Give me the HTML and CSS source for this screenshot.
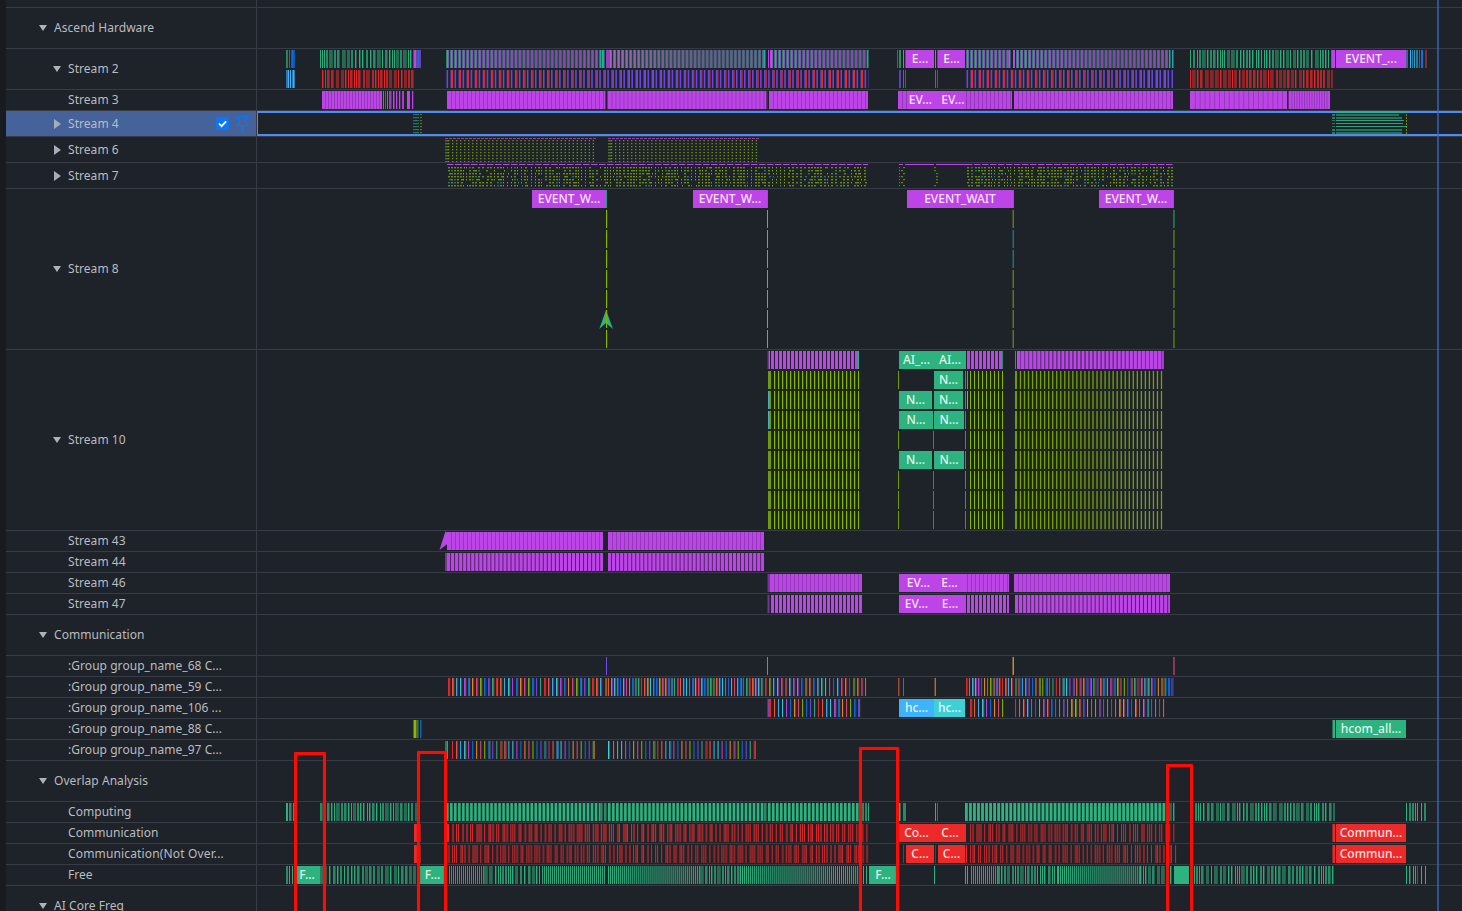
FILE: index.html
```
<!DOCTYPE html>
<html lang="en">
<head>
    <meta charset="UTF-8">
    <meta name="viewport" content="width=device-width, initial-scale=1.0">
    <title>Timeline</title>
    <link rel="stylesheet" href="styles.css">
</head>
<body>
    <div class="timeline">
        <div class="row spacer"><div class="label"></div><div class="track"></div></div>
        <div class="row group"><div class="label"><i class="caret down"></i>Ascend Hardware</div><div class="track"></div></div>
        <div class="row double"><div class="label child"><i class="caret down"></i>Stream 2</div><div class="track" id="s2"></div></div>
        <div class="row"><div class="label child">Stream 3</div><div class="track" id="s3"></div></div>
        <div class="row folded selected">
            <div class="label child">
                <i class="caret right"></i>Stream 4
                <span class="tools">
                    <svg class="check" viewBox="0 0 13 13"><rect width="13" height="13" rx="2" fill="#0a78f5"/><path d="M3 6.5l2.6 2.7L10.2 4.4" fill="none" stroke="#fff" stroke-width="1.8"/></svg>
                    <svg class="pin" viewBox="0 0 13 15"><path d="M1 .5h11v2H9.500v4.500l3 2.500H.5L3.500 7V2.500H1zM5.500 9.500v3.500l1 1.500 1-1.500V9.500" fill="none" stroke="#0a78f5" stroke-width="1.2"/></svg>
                </span>
            </div>
            <div class="track" id="s4"></div>
        </div>
        <div class="row folded"><div class="label child"><i class="caret right"></i>Stream 6</div><div class="track" id="s6"></div></div>
        <div class="row folded"><div class="label child"><i class="caret right"></i>Stream 7</div><div class="track" id="s7"></div></div>
        <div class="row lanes8"><div class="label child"><i class="caret down"></i>Stream 8</div><div class="track" id="s8"></div></div>
        <div class="row lanes9"><div class="label child"><i class="caret down"></i>Stream 10</div><div class="track" id="s10"></div></div>
        <div class="row"><div class="label child">Stream 43</div><div class="track" id="s43"></div></div>
        <div class="row"><div class="label child">Stream 44</div><div class="track" id="s44"></div></div>
        <div class="row"><div class="label child">Stream 46</div><div class="track" id="s46"></div></div>
        <div class="row"><div class="label child">Stream 47</div><div class="track" id="s47"></div></div>
        <div class="row group"><div class="label"><i class="caret down"></i>Communication</div><div class="track"></div></div>
        <div class="row"><div class="label child">:Group group_name_68 C...</div><div class="track" id="g68"></div></div>
        <div class="row"><div class="label child">:Group group_name_59 C...</div><div class="track" id="g59"></div></div>
        <div class="row"><div class="label child">:Group group_name_106 ...</div><div class="track" id="g106"></div></div>
        <div class="row"><div class="label child">:Group group_name_88 C...</div><div class="track" id="g88"></div></div>
        <div class="row"><div class="label child">:Group group_name_97 C...</div><div class="track" id="g97"></div></div>
        <div class="row group"><div class="label"><i class="caret down"></i>Overlap Analysis</div><div class="track"></div></div>
        <div class="row"><div class="label child">Computing</div><div class="track" id="computing"></div></div>
        <div class="row"><div class="label child">Communication</div><div class="track" id="comm"></div></div>
        <div class="row"><div class="label child wide">Communication(Not Over...</div><div class="track" id="notover"></div></div>
        <div class="row"><div class="label child">Free</div><div class="track" id="free"></div></div>
        <div class="row group"><div class="label"><i class="caret down"></i>AI Core Freq</div><div class="track"></div></div>

        <div class="cursor"></div>
        <div class="marker m1"></div>
        <div class="marker m2"></div>
        <div class="marker m3"></div>
        <div class="marker m4"></div>
    </div>
    <script src="timeline.js"></script>
</body>
</html>
```
FILE: styles.css
```
* {
    box-sizing: border-box;
}

body {
    margin: 0;
    height: 911px;
    overflow: hidden;
    background: #1e2229;
    color: #b9bcc0;
    font-family: "Noto Sans", "Open Sans", sans-serif;
    font-size: 12px;
}

.timeline {
    position: relative;
    height: 911px;
    overflow: hidden;
    border-left: 6px solid #181b1f;
}

.row {
    display: flex;
    height: 21px;
    border-bottom: 1px solid #363b46;
}

.spacer { height: 8px; }
.group, .double { height: 41px; }
.folded { height: 26px; }
.lanes8 { height: 161px; }
.lanes9 { height: 181px; }

.label {
    display: flex;
    align-items: center;
    flex: none;
    width: 251px;
    padding-left: 48px;
    padding-bottom: 2px;
    border-right: 1px solid #363b46;
    letter-spacing: 0.05px;
    white-space: nowrap;
}

.label.child {
    padding-left: 62px;
}

.label.wide {
    letter-spacing: 0.15px;
}

.folded .label {
    padding-bottom: 0;
}

.caret {
    border: 0 solid transparent;
}

.caret.down {
    margin-top: 2px;
    margin-left: -15px;
    margin-right: 7px;
    border-width: 6px 4.5px 0;
    border-top-color: #b0b3b6;
}

.caret.right {
    width: 7px;
    margin-left: -14px;
    margin-right: 7px;
    border-width: 5px 0 5px 7px;
    border-left-color: #a4adb8;
}

.selected .label {
    background: #46629b;
}

.selected .track {
    border: 2px solid #4d8bf5;
    border-width: 2px 0 2px 1px;
}

.tools {
    display: flex;
    align-items: center;
    gap: 7px;
    margin-left: auto;
    margin-right: 7px;
}

.check { width: 13px; height: 13px; }
.pin { width: 13px; height: 15px; }

.track {
    position: relative;
    flex: 1;
}

.track svg {
    display: block;
    position: absolute;
    left: 0;
    top: 0;
}

.selected .track svg {
    left: -1px;
    top: -2px;
}

.event {
    position: absolute;
    height: 18px;
    line-height: 18px;
    text-align: center;
    color: rgba(255, 255, 255, 0.87);
    font-weight: 500;
    white-space: nowrap;
    overflow: hidden;
}

.cursor {
    position: absolute;
    left: 1431px;
    top: 0;
    width: 2px;
    height: 100%;
    background: rgba(54, 110, 205, 0.65);
}

.marker {
    position: absolute;
    bottom: -10px;
    border: 3px solid #fb0d05;
    border-radius: 1px;
    box-shadow: 0 0 1px #a01010, inset 0 0 1px #a01010;
}

.m1 { left: 288px; width: 32px; top: 752px; }
.m2 { left: 411px; width: 30px; top: 751px; }
.m3 { left: 853px; width: 40px; top: 747px; }
.m4 { left: 1160px; width: 27px; top: 764px; }
```
FILE: timeline.js
```
const ORIGIN = 257;
const PURPLE = '#bd45e8';
const GREEN = '#2db37f';
const OLIVE = '#86b800';
const RED = '#ed2a2a';
const VIOLET = '#6a4df0';
const BLUE = '#0a6fe8';
const SKY = '#3db3fb';
const CYAN = '#3fd0d6';
const MIX = [RED, '#ff5a36', SKY, CYAN, PURPLE, BLUE, '#f09022', '#e04a80', OLIVE, BLUE, VIOLET, GREEN];

let seed = 7;
function rand() {
    seed = (seed * 16807) % 2147483647;
    return seed / 2147483647;
}

// Collects the shapes of one row, x is measured on the whole window
function row(id) {
    const el = document.getElementById(id);
    const parts = [];
    const r = {
        box(x, y, w, h, color, alpha = 1) {
            parts.push(`<rect x="${+x.toFixed(2)}" y="${y}" width="${+w.toFixed(2)}" height="${h}" fill="${color}" opacity="${alpha}"/>`);
            return r;
        },
        bar(x, w, color, lane = 0, alpha = 1) {
            return r.box(x, 1 + lane * 20, w, 18, color, alpha);
        },
        comb(from, to, pitch, w, color, lane = 0, alpha = 1) {
            for (let x = from; x < to; x += pitch) r.bar(x, Math.min(w, to - x), color, lane, alpha);
            return r;
        },
        solid(from, to, pitch, lane = 0) {
            r.bar(from, to - from, PURPLE, lane);
            for (let x = from + pitch; x < to - 1; x += pitch) r.bar(x, 0.9, '#7d35a0', lane, 0.75);
            return r;
        },
        // irregular bars, thin ones bright and wide ones dim, some touching
        noise(from, to, color, density = 0.75, lane = 0) {
            let x = from;
            while (x < to) {
                const v = rand();
                const w = v < 0.45 ? 1 : v < 0.8 ? 2 : 3;
                r.bar(x, Math.min(w, to - x), color, lane, w === 1 ? 0.95 : w === 2 ? 0.7 : 0.5);
                x += w;
                if (rand() < 0.5 && x < to) {
                    r.bar(x, 1, color, lane, 0.4);
                    x += 1;
                }
                x += rand() < density ? 1 : 2;
            }
            return r;
        },
        mix(from, to, pitch, extra = 0, lane = 0) {
            let i = 0;
            for (let x = from; x < to; x += pitch) {
                r.bar(x, 1.1, MIX[i++ % MIX.length], lane, 0.9);
                if (rand() < extra) r.bar(x + 1.2, 1, MIX[Math.floor(rand() * 12)], lane, 0.65);
            }
            return r;
        },
        path(d, color) {
            parts.push(`<path d="${d}" fill="${color}"/>`);
            return r;
        },
        event(from, to, text, color, lane = 0) {
            const div = document.createElement('div');
            div.className = 'event';
            div.textContent = text;
            div.style.cssText = `left:${from - ORIGIN}px;width:${to - from}px;top:${1 + lane * 20}px;background:${color}`;
            el.appendChild(div);
            return r;
        },
        draw() {
            const h = el.parentNode.offsetHeight - 1;
            el.insertAdjacentHTML('afterbegin', `<svg width="1205" height="${h}" viewBox="${ORIGIN} 0 1205 ${h}">${parts.join('')}</svg>`);
        }
    };
    return r;
}

// Stream 2
const s2 = row('s2');
s2.bar(286, 1, GREEN, 0, 0.7).bar(287, 1, BLUE).bar(289, 1, BLUE).bar(291, 4, '#1457a6').bar(292, 1, BLUE);
s2.bar(286, 2, '#2b78aa', 1).bar(288, 1, SKY, 1).bar(290, 1, SKY, 1).bar(292, 3, '#2b78aa', 1).bar(293, 1, SKY, 1);
s2.noise(320, 414, GREEN, 0.8).bar(414, 2, PURPLE).bar(416, 2, '#803a9d').bar(418, 1, BLUE).bar(419, 2, '#70409c');
s2.noise(322, 415, RED, 0.75, 1);
[[446, 600], [609, 764], [770, 867], [966, 1009], [1016, 1170]].forEach(([a, b]) => {
    s2.comb(a, b, 4.02, 1, '#218766').comb(a + 1, b, 4.02, 1, '#9d6cbc').comb(a + 2, b, 4.02, 0.8, PURPLE).comb(a + 2.8, b, 4.02, 0.3, GREEN);
});
[[446, 869], [966, 1173]].forEach(([a, b]) => {
    s2.comb(a + 0.5, b, 4.02, 1.6, VIOLET, 1, 0.9).comb(a + 6, b, 8.04, 1.1, RED, 1);
});
[600, 603, 764, 867, 1009, 1169, 1172].forEach(x => s2.bar(x, 1.5, '#2ba0aa'));
s2.bar(602, 1, GREEN).bar(606, 3, '#9b3cbf').bar(768, 1, PURPLE).bar(770, 1, PURPLE).bar(1013, 2, PURPLE);
s2.bar(897, 1, '#81409e').bar(899, 2, '#249264').bar(903, 1, GREEN).bar(905, 1, '#803a9d').bar(935, 1, GREEN).bar(937, 1, '#803a9d');
s2.bar(899, 2, VIOLET, 1, 0.75).bar(903, 1, VIOLET, 1).bar(905, 1, RED, 1, 0.8).bar(935, 1, VIOLET, 1).bar(937, 1, RED, 1, 0.8);
s2.noise(1190, 1332, GREEN, 0.8).noise(1190, 1333, RED, 0.75, 1).bar(1332, 3, PURPLE);
s2.bar(1406, 2, '#42658e').bar(1410, 1, SKY).bar(1412, 1, '#2b78aa').bar(1414, 1, CYAN, 0, 0.7).bar(1416, 2, '#1979b7').bar(1419, 1, BLUE).bar(1421, 2, BLUE).bar(1425, 2, '#822c2b');
s2.event(906, 934, 'E...', PURPLE).event(938, 965, 'E...', PURPLE).event(1336, 1406, 'EVENT_...', PURPLE);
s2.draw();

// Stream 3
const s3 = row('s3');
s3.solid(322, 382, 3).bar(383, 1, PURPLE).bar(385, 1, PURPLE, 0, 0.7).bar(387, 1, PURPLE).bar(389, 2.5, PURPLE, 0, 0.8).bar(393, 1.5, PURPLE);
s3.bar(396, 1.3, PURPLE).bar(399, 1.3, PURPLE).bar(402, 2, PURPLE, 0, 0.85).bar(407, 3, PURPLE).bar(412, 1.3, PURPLE);
s3.solid(447, 605, 4).bar(605, 1, '#613078').solid(607.5, 766.5, 4).bar(766.5, 1, '#613078').solid(769, 868, 4);
s3.solid(898, 1012, 4).solid(1014, 1173, 4).solid(1190, 1287, 4.85).bar(1288, 1, '#613078').solid(1289, 1330, 2.5);
s3.bar(908, 58, PURPLE).event(906, 935, 'EV...', 'transparent').event(938, 968, 'EV...', 'transparent').draw();

// Stream 4, folded
const s4 = row('s4');
const ends = [1399, 1402, 1404, 1403, 1407, 1402, 1402];
ends.forEach((end, i) => {
    const y = 3 + i * 3;
    const h = i % 6 < 2 || i > 4 ? 2 : 1;
    s4.box(413, y, 3, 1.2, '#398c9e', 0.7).box(416, y, 3, 1.2, GREEN, 0.6).box(420, y, 2, 1.2, OLIVE, 0.55);
    s4.box(1332, y, 3, h, GREEN, 0.6).box(1336, y, end - 1336, h, GREEN, h > 1 ? 0.55 : 0.9).box(1406, y, 1, 2, OLIVE, 0.7);
});
s4.box(1336, 1, 70, 1, '#2daea5').draw();

// Stream 6 and 7, folded
const s6 = row('s6');
[[445, 596], [608, 757]].forEach(([a, b]) => {
    for (let x = a; x < b; x += 4) s6.box(x, 1, 3, 1, PURPLE, 0.75);
    for (let y = 3; y < 25; y += 3) {
        s6.box(a, y, 3, 1.5, '#5b8420', 0.8);
        for (let x = a + 3; x < b; x += 4.02) s6.box(x, y, 1.3, 1.3, OLIVE, 0.8);
    }
});
s6.draw();

const s7 = row('s7');
[[447, 868], [966, 1173]].forEach(([a, b]) => {
    for (let x = a; x < b; x += 8) s7.box(x, 1, Math.min(6.5, b - x), 1, PURPLE);
    for (let x = a + 1; x < b - 1; x += rand() < 0.5 ? 4 : 3) {
        const w = rand() < 0.4 ? 1 : 2;
        for (let y = 4; y < 24; y += 3) {
            if (rand() < 0.88) s7.box(x + (rand() < 0.15 ? 1 : 0), y, w, 1.4, rand() < 0.08 ? '#279385' : OLIVE, w > 1 ? 0.7 : 0.9);
        }
    }
});
s7.box(899, 1, 4, 1, PURPLE).box(905, 1, 29, 1, PURPLE).box(936, 1, 30, 1, PURPLE);
for (let y = 4; y < 24; y += 3) {
    s7.box(899, y, 1, 1.2, '#279385').box(y % 2 ? 901 : 903, y, 2, 1.2, OLIVE, 0.7).box(y > 8 && y < 20 ? 936 : 934, y, 2, 1.2, OLIVE, 0.6);
}
s7.draw();

// Stream 8
const s8 = row('s8');
for (let lane = 1; lane < 8; lane++) {
    s8.bar(606, 1, OLIVE, lane).bar(607, 1, OLIVE, lane, 0.15).bar(767, 1, '#8fa812', lane);
    s8.bar(1012.6, 1.2, lane === 2 || lane === 3 ? '#25877a' : '#6f8c20', lane).bar(1173.2, 1.5, lane === 1 ? '#258060' : '#597a19', lane);
}
s8.path('M606 121L599.3 140L606 134L613 140Z', GREEN).bar(606, 1, OLIVE, 6);
[[532, 606, 'EVENT_W...'], [693, 767, 'EVENT_W...'], [907, 1013, 'EVENT_WAIT'], [1099, 1173, 'EVENT_W...']].forEach(([a, b, t]) => {
    s8.event(a, b, t, PURPLE).bar(b, 1, '#279b79');
});
s8.draw();

// Stream 10
const s10 = row('s10');
s10.bar(767.5, 1.5, '#7a3299').bar(769, 1, GREEN).comb(771, 858, 4, 3, PURPLE).bar(858, 1, GREEN);
s10.comb(967, 1002, 4, 3, PURPLE).bar(1002, 1, GREEN, 0, 0.7);
s10.bar(1015, 1, '#279b79').comb(1017, 1163, 4.03, 3.1, PURPLE).comb(1020, 1163, 4.03, 1, '#713791').bar(1163, 1, GREEN, 0, 0.7);
for (let lane = 1; lane < 9; lane++) {
    s10.bar(768, 3, '#70990c', lane).comb(774, 859, 4, 1, OLIVE, lane).comb(775, 859, 4, 0.3, OLIVE, lane, 0.6);
    s10.comb(970, 1003, 4, 1, OLIVE, lane);
    s10.bar(1015, 2, '#70990c', lane).comb(1019.8, 1164, 4.03, 1.3, OLIVE, lane, 0.85);
    s10.bar(965, 1, OLIVE, lane, 0.7).bar(967, 1, lane < 2 ? GREEN : lane === 2 ? SKY : OLIVE, lane, lane < 3 ? 1 : 0);
    if (lane === 1 || lane === 4 || lane > 5) s10.bar(898, 1, OLIVE, lane, 0.8);
    if (lane === 4 || lane > 5) s10.bar(933, 1, OLIVE, lane, 0.65);
}
s10.bar(768, 1, SKY, 2, 0.8).bar(768, 1, SKY, 3, 0.8);
s10.event(899, 934, 'AI_...', GREEN).event(934, 966, 'AI...', GREEN).event(934, 963, 'N...', GREEN, 1);
s10.event(899, 932, 'N...', GREEN, 2).event(934, 963, 'N...', GREEN, 2);
s10.event(899, 933, 'N...', GREEN, 3).event(934, 964, 'N...', GREEN, 3);
s10.event(899, 932, 'N...', GREEN, 5).event(934, 964, 'N...', GREEN, 5).draw();

// Stream 43 - 47
row('s43').solid(447, 603, 4).solid(608, 764, 4).path('M445.5 0L439.5 19L446 14L448 12V3Z', PURPLE).draw();
row('s44').bar(445, 2, '#713791').comb(447, 603, 4.03, 3.1, PURPLE).comb(447, 603, 4.03, 4.1, PURPLE, 0, 0.2)
    .comb(608, 764, 4.03, 3.1, PURPLE).comb(608, 764, 4.03, 4.1, PURPLE, 0, 0.2).draw();
row('s46').bar(767.5, 2.5, '#713791').solid(770, 862, 4).solid(899, 1009, 4).bar(903, 63, PURPLE).solid(1014, 1170, 4)
    .event(902, 935, 'EV...', 'transparent').event(934, 965, 'E...', 'transparent').draw();
row('s47').bar(767.5, 2, '#713791').comb(771, 862, 4, 3, PURPLE).comb(967, 1009, 4, 3, PURPLE)
    .comb(1015, 1170, 4.03, 3.1, PURPLE).comb(1015, 1170, 4.03, 4.1, PURPLE, 0, 0.2)
    .event(899, 934, 'EV...', PURPLE).event(934, 966, 'E...', PURPLE).draw();

// Communication groups
row('g68').bar(606, 1, VIOLET).bar(767, 1, GREEN).bar(1012.5, 1.5, '#d0852c').bar(1173, 2, '#8c3659').draw();
row('g59').mix(448, 604, 4, 0.75).mix(605, 764, 3, 0.65).mix(765, 868, 4, 0.9).bar(898, 1.5, '#9b4930').bar(903, 1, VIOLET)
    .bar(934.6, 1.3, '#b97b2b').mix(966, 1012, 3, 0.6).mix(1015, 1173, 3.4, 0.65).draw();
row('g106').bar(767.5, 1.5, '#8340a6').bar(769, 1, BLUE).mix(770, 859, 4, 0.15).mix(970, 1003, 4, 0.1).mix(1015, 1164, 4, 0.4)
    .event(899, 934, 'hc...', SKY).event(934, 965, 'hc...', CYAN).draw();
row('g88').bar(413.5, 3, OLIVE).bar(417, 1.5, '#267d61').bar(420, 1.5, '#155eb0').bar(1332, 1, GREEN, 0, 0.5).bar(1333, 2, GREEN)
    .event(1336, 1406, 'hcom_all...', GREEN).draw();
row('g97').bar(445, 2, '#277a5c').bar(447, 1, '#e04a80').mix(452, 596, 4.02, 0.2).bar(608, 1, CYAN).mix(609, 757, 4.02, 0.2).draw();

// Overlap analysis
row('computing').bar(286, 1, GREEN).noise(287, 295, GREEN, 0.7).noise(320, 421, GREEN, 0.8)
    .comb(446, 600, 4.02, 2.6, GREEN).noise(600, 607, GREEN).comb(608, 764, 4.02, 2.6, GREEN).noise(764, 768, GREEN)
    .comb(768, 862, 4, 2.6, GREEN).noise(862, 869, GREEN, 0.9).bar(899, 1.5, GREEN).bar(903, 3, GREEN, 0, 0.7)
    .bar(935, 1, GREEN).bar(937, 1, GREEN, 0, 0.6).comb(965, 1166, 4.03, 2.8, GREEN).noise(1166, 1175, GREEN)
    .noise(1190, 1335, GREEN, 0.78).bar(1406, 1, GREEN).noise(1409, 1418, GREEN, 0.75).bar(1421, 1, GREEN).bar(1424, 2, GREEN, 0, 0.7).draw();

// bars come in clusters of one to three followed by a wider gap
function redBars(r, from, to, alpha) {
    let x = from;
    while (x < to) {
        const n = 1 + Math.floor(rand() * 3);
        for (let i = 0; i < n && x < to; i++) {
            const dim = rand() < 0.4;
            r.bar(x, dim ? 2 : 1.1, RED, 0, dim ? alpha * 0.65 : alpha);
            x += 2;
        }
        x += n === 1 ? 2 : 2.05;
    }
}

const comm = row('comm');
comm.bar(414, 3, RED).bar(419, 2, RED, 0, 0.6).bar(447, 2, RED).bar(1332, 1, RED, 0, 0.5).bar(1333, 2, RED);
redBars(comm, 452, 868, 0.9);
redBars(comm, 970, 1175, 0.8);
comm.event(899, 934, 'Co...', RED).event(934, 966, 'C...', RED).event(1336, 1406, 'Commun...', RED).draw();

const notover = row('notover');
notover.bar(414, 3, RED).bar(419, 2, RED, 0, 0.6).bar(448, 2, RED, 0, 0.5).bar(903, 1, RED, 0, 0.6).bar(935, 1, RED, 0, 0.5);
notover.bar(966, 1, RED).bar(1332, 1, RED, 0, 0.5).bar(1333, 2, RED);
redBars(notover, 452, 868, 0.8);
redBars(notover, 970, 1175, 0.8);
notover.event(906, 934, 'C...', RED).event(938, 965, 'C...', RED).event(1336, 1406, 'Commun...', RED).draw();

const free = row('free');
free.bar(286, 2, GREEN, 0, 0.7).bar(289, 1, GREEN).bar(292, 1, GREEN).bar(320, 3, GREEN, 0, 0.6).noise(324, 416, GREEN, 0.7);
free.comb(449, 484, 2, 1, GREEN, 0, 0.85).noise(484, 542, GREEN, 0.7).comb(542, 606, 2, 1, GREEN, 0, 0.9).comb(608, 700, 2.02, 1, GREEN).noise(700, 740, GREEN, 0.65);
free.comb(740, 862, 2.02, 1, GREEN).bar(863, 1, GREEN).bar(866, 1, GREEN).bar(934, 1, GREEN).bar(965, 1, GREEN).bar(967, 1, GREEN);
free.comb(971, 998, 2, 1, GREEN, 0, 0.9).noise(998, 1058, GREEN, 0.75).comb(1058, 1140, 2.02, 1, GREEN).noise(1140, 1173, GREEN, 0.7);
free.noise(1190, 1335, GREEN, 0.65).bar(1406, 1, GREEN).noise(1409, 1418, GREEN, 0.65).bar(1421, 1, GREEN).bar(1425, 1, GREEN);
free.event(294, 320, 'F...', GREEN).event(419, 446, 'F...', GREEN).event(869, 897, 'F...', GREEN).event(1174, 1189, '', GREEN).draw();
```
